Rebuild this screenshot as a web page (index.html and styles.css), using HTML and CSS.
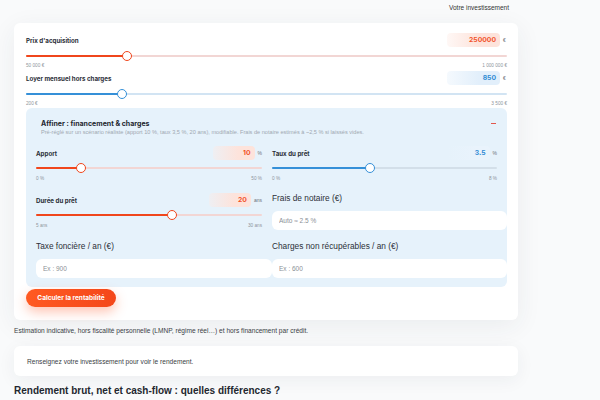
FILE: index.html
```html
<!DOCTYPE html>
<html lang="fr">
<head>
<meta charset="utf-8">
<title>Rentabilité locative</title>
<link rel="stylesheet" href="styles.css">
</head>
<body>
<div class="page">
  <div class="topbar"><span>Votre investissement</span></div>

  <div class="card">
    <div class="field">
      <div class="field-head">
        <span class="label">Prix d'acquisition</span>
        <span class="value-wrap"><span class="value wide orange">250000</span><span class="unit">€</span></span>
      </div>
      <div class="slider orange"><div class="fill" style="width:21%"></div><div class="thumb" style="left:21%"></div></div>
      <div class="ticks"><span>50 000 €</span><span>1 000 000 €</span></div>
    </div>

    <div class="field">
      <div class="field-head">
        <span class="label">Loyer mensuel hors charges</span>
        <span class="value-wrap"><span class="value wide blue">850</span><span class="unit">€</span></span>
      </div>
      <div class="slider blue"><div class="fill" style="width:20%"></div><div class="thumb" style="left:20%"></div></div>
      <div class="ticks"><span>200 €</span><span>3 500 €</span></div>
    </div>

    <div class="panel">
      <div class="panel-head">
        <span class="panel-title">Affiner : financement &amp; charges</span>
        <span class="minus"></span>
      </div>
      <p class="panel-sub">Pré-réglé sur un scénario réaliste (apport 10 %, taux 3,5 %, 20 ans), modifiable. Frais de notaire estimés à ~2,5 % si laissés vides.</p>

      <div class="grid">
        <div class="field">
          <div class="field-head">
            <span class="label">Apport</span>
            <span class="value-wrap"><span class="value orange">10</span><span class="unit">%</span></span>
          </div>
          <div class="slider orange"><div class="fill" style="width:20%"></div><div class="thumb" style="left:20%"></div></div>
          <div class="ticks"><span>0 %</span><span>50 %</span></div>
        </div>

        <div class="field">
          <div class="field-head">
            <span class="label">Taux du prêt</span>
            <span class="value-wrap"><span class="value faint blue">3.5</span><span class="unit">%</span></span>
          </div>
          <div class="slider blue grey"><div class="fill" style="width:43.75%"></div><div class="thumb" style="left:43.75%"></div></div>
          <div class="ticks"><span>0 %</span><span>8 %</span></div>
        </div>

        <div class="field">
          <div class="field-head">
            <span class="label">Durée du prêt</span>
            <span class="value-wrap"><span class="value orange">20</span><span class="unit">ans</span></span>
          </div>
          <div class="slider orange"><div class="fill" style="width:60%"></div><div class="thumb" style="left:60%"></div></div>
          <div class="ticks"><span>5 ans</span><span>30 ans</span></div>
        </div>

        <label class="text-field">
          <span class="text-label">Frais de notaire (€)</span>
          <input class="text-input" type="text" placeholder="Auto ≈ 2.5 %">
        </label>

        <label class="text-field">
          <span class="text-label">Taxe foncière / an (€)</span>
          <input class="text-input" type="text" placeholder="Ex : 900">
        </label>

        <label class="text-field">
          <span class="text-label">Charges non récupérables / an (€)</span>
          <input class="text-input" type="text" placeholder="Ex : 600">
        </label>
      </div>
    </div>

    <button class="cta" type="button">Calculer la rentabilité</button>
  </div>

  <p class="note">Estimation indicative, hors fiscalité personnelle (LMNP, régime réel…) et hors financement par crédit.</p>

  <div class="result">Renseignez votre investissement pour voir le rendement.</div>

  <h2 class="heading">Rendement brut, net et cash-flow : quelles différences ?</h2>
</div>
</body>
</html>
```

FILE: styles.css
```css
* { box-sizing: border-box; }

html, body {
  margin: 0;
  padding: 0;
}

body {
  background: #f9fafb;
  font-family: "Liberation Sans", Arial, sans-serif;
  color: #2b2f36;
  width: 600px;
  height: 400px;
  overflow: hidden;
}

.page {
  width: 504px;
  margin-left: 14px;
}

.topbar {
  height: 23px;
  display: flex;
  justify-content: flex-end;
  padding-right: 9px;
  padding-top: 4px;
  font-size: 6.5px;
  line-height: 8px;
  color: #333;
}

.card {
  background: #fff;
  border-radius: 6px;
  padding: 10px 11px 13px 12px;
  box-shadow: 0 6px 26px rgba(40, 50, 70, 0.07);
}

.field + .field { margin-top: 2px; }

.field-head {
  height: 14px;
  display: flex;
  align-items: center;
  justify-content: space-between;
}

.label {
  font-family: Inter, "Liberation Sans", sans-serif;
  font-weight: 700;
  font-size: 6.2px;
  color: #2a2e37;
}

.value-wrap {
  display: flex;
  align-items: center;
  gap: 3px;
  height: 14px;
}

.value {
  height: 14px;
  width: 42px;
  border-radius: 4px;
  text-align: right;
  padding-right: 4px;
  font-family: Inter, "Liberation Sans", sans-serif;
  font-weight: 700;
  font-size: 6.8px;
  line-height: 14px;
}

.value.wide { width: 53px; }

.value.orange {
  color: #f2542b;
  background: linear-gradient(90deg, rgba(254, 234, 228, 0.35), #fde3db 60%);
}

.value.blue {
  color: #2e8ad4;
  background: linear-gradient(90deg, rgba(226, 239, 251, 0.35), #e2effb 60%);
}

.value.faint.blue {
  background: linear-gradient(90deg, rgba(230, 242, 251, 0), #e9f3fc 70%);
}

.unit {
  font-size: 5px;
  color: #6b7078;
  min-width: 4px;
}

.slider {
  position: relative;
  height: 10px;
  margin-top: 4px;
}

.slider::before {
  content: "";
  position: absolute;
  left: 0;
  right: 0;
  top: 4px;
  height: 2px;
  border-radius: 1px;
}

.slider.orange::before { background: #f2d6d4; }
.slider.blue::before { background: #d2e4f3; }
.slider.blue.grey::before { background: #d3dfe9; }

.slider .fill {
  position: absolute;
  left: 0;
  top: 4px;
  height: 2px;
  border-radius: 1px;
}

.slider.orange .fill { background: #f0461c; }
.slider.blue .fill { background: #3590d8; }

.slider .thumb {
  position: absolute;
  top: 0;
  width: 10px;
  height: 10px;
  margin-left: -5px;
  border-radius: 50%;
  background: #fff;
}

.slider.orange .thumb { border: 1.5px solid #f0461c; }
.slider.blue .thumb { border: 1.5px solid #3590d8; }

.ticks {
  display: flex;
  justify-content: space-between;
  margin-top: 2px;
  font-size: 4.7px;
  line-height: 6px;
  color: #8f959c;
}

.panel {
  margin-top: 1px;
  background: #e6f2fb;
  border-radius: 6px;
  padding: 10px 10px 9px 10px;
}

.panel-head {
  display: flex;
  align-items: center;
  justify-content: space-between;
  padding-left: 5px;
  height: 10px;
}

.panel-title {
  font-family: Inter, "Liberation Sans", sans-serif;
  font-weight: 700;
  font-size: 7px;
  color: #23272f;
}

.minus {
  display: block;
  width: 5px;
  height: 1px;
  margin-top: 1px;
  background: #e2574c;
  margin-right: 1px;
}

.panel-sub {
  margin: 0;
  padding-left: 5px;
  font-size: 5.6px;
  line-height: 8px;
  color: #a0a8b1;
}

.grid {
  margin-top: 10px;
  display: grid;
  grid-template-columns: 226px 225px;
  column-gap: 10px;
  row-gap: 11px;
  align-items: start;
}

.grid .field + .field { margin-top: 0; }
.grid .slider { margin-top: 3px; }
.grid .ticks { margin-top: 3px; }

.text-field {
  display: block;
}

.text-label {
  display: block;
  font-size: 8.3px;
  line-height: 11px;
  color: #2c3038;
}

.text-input {
  display: block;
  width: calc(100% + 10px);
  height: 19px;
  margin-top: 7px;
  border: none;
  border-radius: 6px;
  background: #fff;
  padding: 0 6px 0 7px;
  font-family: "Liberation Sans", Arial, sans-serif;
  font-size: 6.5px;
  color: #333;
  outline: none;
}

.text-input::placeholder { color: #8a8f96; }

.cta {
  display: block;
  margin-top: 2px;
  width: 90px;
  height: 18px;
  border: none;
  border-radius: 9px;
  background: linear-gradient(90deg, #ff5a22, #f4471a);
  color: #fff;
  font-family: Inter, "Liberation Sans", sans-serif;
  font-weight: 700;
  font-size: 6.5px;
  padding: 0;
  box-shadow: 0 5px 12px rgba(255, 90, 40, 0.35);
}

.note {
  margin: 7px 0 0 0;
  font-size: 6.6px;
  line-height: 8px;
  color: #3a3e45;
}

.result {
  margin-top: 11px;
  height: 30px;
  background: #fff;
  border-radius: 6px;
  padding-left: 13px;
  display: flex;
  align-items: center;
  font-size: 6.6px;
  color: #3a3e45;
  box-shadow: 0 4px 18px rgba(40, 50, 70, 0.06);
}

.heading {
  margin: 9px 0 0 0;
  font-size: 10px;
  line-height: 12px;
  font-weight: 700;
  color: #23272f;
}
```
